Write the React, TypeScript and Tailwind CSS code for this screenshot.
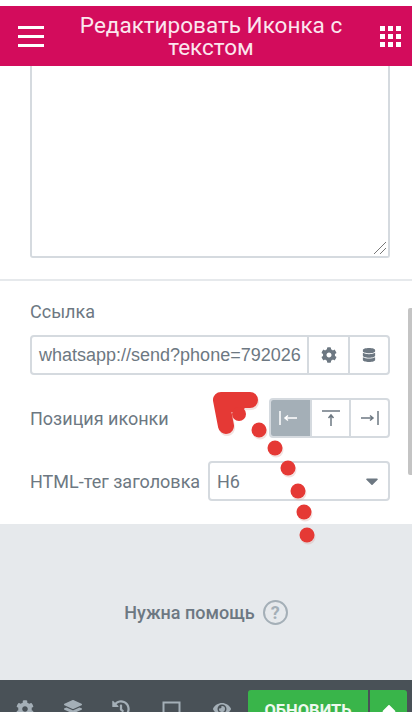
import { FaCog, FaDatabase, FaLayerGroup, FaHistory, FaEye, FaCaretUp, FaCaretDown } from "react-icons/fa";

const rb = "font-['Roboto',sans-serif]";

function Hamburger() {
  return (
    <div className="flex w-[26px] flex-col gap-[6px]">
      <div className="h-[3px] bg-white" />
      <div className="h-[3px] bg-white" />
      <div className="h-[3px] bg-white" />
    </div>
  );
}

function Grid() {
  return (
    <div className="grid w-[21px] grid-cols-3 gap-[3px]">
      {[0, 1, 2, 3, 4, 5, 6, 7, 8].map((i) => (
        <div key={i} className="h-[5px] w-[5px] bg-white" />
      ))}
    </div>
  );
}

function Annotation() {
  const dots = [
    [259, 430], [275, 448], [288, 468], [298, 491], [304, 512], [307, 535],
  ];
  return (
    <svg className="absolute left-0 top-0" width="412" height="712" viewBox="0 0 412 712">
      <g transform="translate(1 2)" opacity="0.3">
        <path d="M222 401 L250 400 M222 401 L226 426" fill="none" stroke="#d9a09a" strokeWidth="16" strokeLinecap="round" />
        {dots.map(([x, y]) => (
          <circle key={`s${x}-${y}`} cx={x} cy={y} r="7.5" fill="#d9a09a" />
        ))}
      </g>
      <path d="M221 400 L250 400 M221 400 L226 426 M224 404 L238 404" fill="none" stroke="#e53935" strokeWidth="16" strokeLinecap="round" strokeLinejoin="round" />
      <circle cx="239" cy="414" r="7" fill="#e53935" />
      {dots.map(([x, y]) => (
        <circle key={`${x}-${y}`} cx={x} cy={y} r="7.5" fill="#e53935" />
      ))}
    </svg>
  );
}

export default function App() {
  return (
    <div className={`relative flex h-[712px] w-[412px] flex-col overflow-hidden bg-white ${rb}`}>
      <div className="h-[6px] shrink-0 bg-white" />
      <header className="flex h-[60px] shrink-0 items-center justify-between bg-[#d30c5c] pl-[18px] pr-[11px]">
        <Hamburger />
        <h1 className="-ml-[2px] w-[290px] text-center text-[22.5px] leading-[22px] font-normal text-[#fbe6ee]">
          Редактировать Иконка с текстом
        </h1>
        <Grid />
      </header>

      <div className="flex h-[215px] shrink-0 flex-col border-b-2 border-[#e6e9ec] pl-[30px] pr-[22px]">
        <div className="relative h-[192px] rounded-b-[3px] border-2 border-t-0 border-[#d5dadf]">
          <svg className="absolute bottom-[1px] right-[1px]" width="14" height="14" viewBox="0 0 14 14">
            <path d="M1 13 L13 1 M7 13 L13 7" stroke="#555" strokeWidth="0.8" />
          </svg>
        </div>
      </div>

      <section className="flex h-[243px] shrink-0 flex-col pl-[30px] pr-[22px] pt-[21px] text-[#6d7882]">
        <label className="h-[20px] text-[18px] leading-[20px]">Ссылка</label>
        <div className="mt-[13px] flex h-[40px] overflow-hidden rounded-[4px] border-2 border-[#d5dadf]">
          <div className="flex w-[275px] shrink-0 items-center overflow-hidden whitespace-nowrap pl-[7px] font-['Liberation_Sans',sans-serif] text-[18px]">
            whatsapp://send?phone=792026
          </div>
          <div className="flex w-[41px] items-center justify-center border-l-2 border-[#d5dadf]">
            <FaCog className="text-[16px]" />
          </div>
          <div className="flex flex-1 items-center justify-center border-l-2 border-[#d5dadf]">
            <FaDatabase className="text-[14px]" />
          </div>
        </div>

        <div className="mt-[23px] flex h-[40px] items-center justify-between">
          <span className="text-[18px]">Позиция иконки</span>
          <div className="flex h-[40px] w-[121px] overflow-hidden rounded-[4px] border-2 border-[#d5dadf]">
            <div className="-my-[2px] -ml-[2px] flex w-[41px] items-center justify-center bg-[#a4afb7] text-white">
              <svg className="-ml-[3px]" width="20" height="18" viewBox="0 0 20 18" fill="none" stroke="currentColor" strokeWidth="1.5">
                <path d="M2 2 V16 M7 9 H19 M10 6.5 L7 9 L10 11.5" />
              </svg>
            </div>
            <div className="flex w-[41px] items-center justify-center border-x-2 border-[#d5dadf]">
              <svg width="18" height="18" viewBox="0 0 18 18" fill="none" stroke="currentColor" strokeWidth="1.5">
                <path d="M0 2 H18 M9 6 V17 M6.5 9 L9 6 L11.5 9" />
              </svg>
            </div>
            <div className="flex flex-1 items-center justify-center">
              <svg width="20" height="18" viewBox="0 0 20 18" fill="none" stroke="currentColor" strokeWidth="1.5">
                <path d="M18 2 V16 M1 9 H13 M10 6.5 L13 9 L10 11.5" />
              </svg>
            </div>
          </div>
        </div>

        <div className="mt-[23px] flex h-[40px] items-center justify-between">
          <span className="text-[18px] whitespace-nowrap">HTML-тег заголовка</span>
          <div className="flex h-[40px] w-[182px] items-center justify-between rounded-[4px] border-2 border-[#d5dadf] pl-[7px] pr-[6px]">
            <span className="text-[18px]">H6</span>
            <FaCaretDown className="text-[20px]" />
          </div>
        </div>
      </section>

      <section className="flex min-h-0 flex-1 items-center justify-center gap-[8px] bg-[#e6e9ec] pt-[21px]">
        <span className="text-[18px] font-medium text-[#6d7882]">Нужна помощь</span>
        <span className="flex h-[25px] w-[25px] items-center justify-center rounded-full border-2 border-[#a4afb7] text-[18px] font-bold text-[#a4afb7]">
          ?
        </span>
      </section>

      <footer className="flex h-[32px] shrink-0 items-start bg-[#495157] pl-[16px] pr-[5px] text-[#a4afb7]">
        <div className="flex w-[232px] items-center gap-[30px] pt-[20px] text-[18px]">
          <FaCog />
          <FaLayerGroup />
          <FaHistory />
          <svg className="ml-[2px]" width="19" height="17" viewBox="0 0 19 17" fill="none" stroke="currentColor" strokeWidth="2">
            <path d="M1.5 1.5 H17.5 V13 H1.5 Z" />
          </svg>
          <FaEye className="ml-[2px]" />
        </div>
        <div className="mt-[10px] flex h-[40px]">
          <div className="flex h-[40px] w-[120px] items-start justify-center rounded-l-[3px] bg-[#39b54a] pt-[9px] text-[16.5px] font-bold text-[#eef9ef]">
            ОБНОВИТЬ
          </div>
          <div className="ml-[2px] flex h-[40px] w-[37px] items-start justify-center rounded-r-[3px] bg-[#39b54a] pt-[7px] text-white">
            <FaCaretUp className="text-[22px]" />
          </div>
        </div>
      </footer>

      <div className="absolute right-0 top-[308px] h-[167px] w-[4px] rounded-l-[2px] bg-[#c4c4c4]" />
      <Annotation />
    </div>
  );
}
